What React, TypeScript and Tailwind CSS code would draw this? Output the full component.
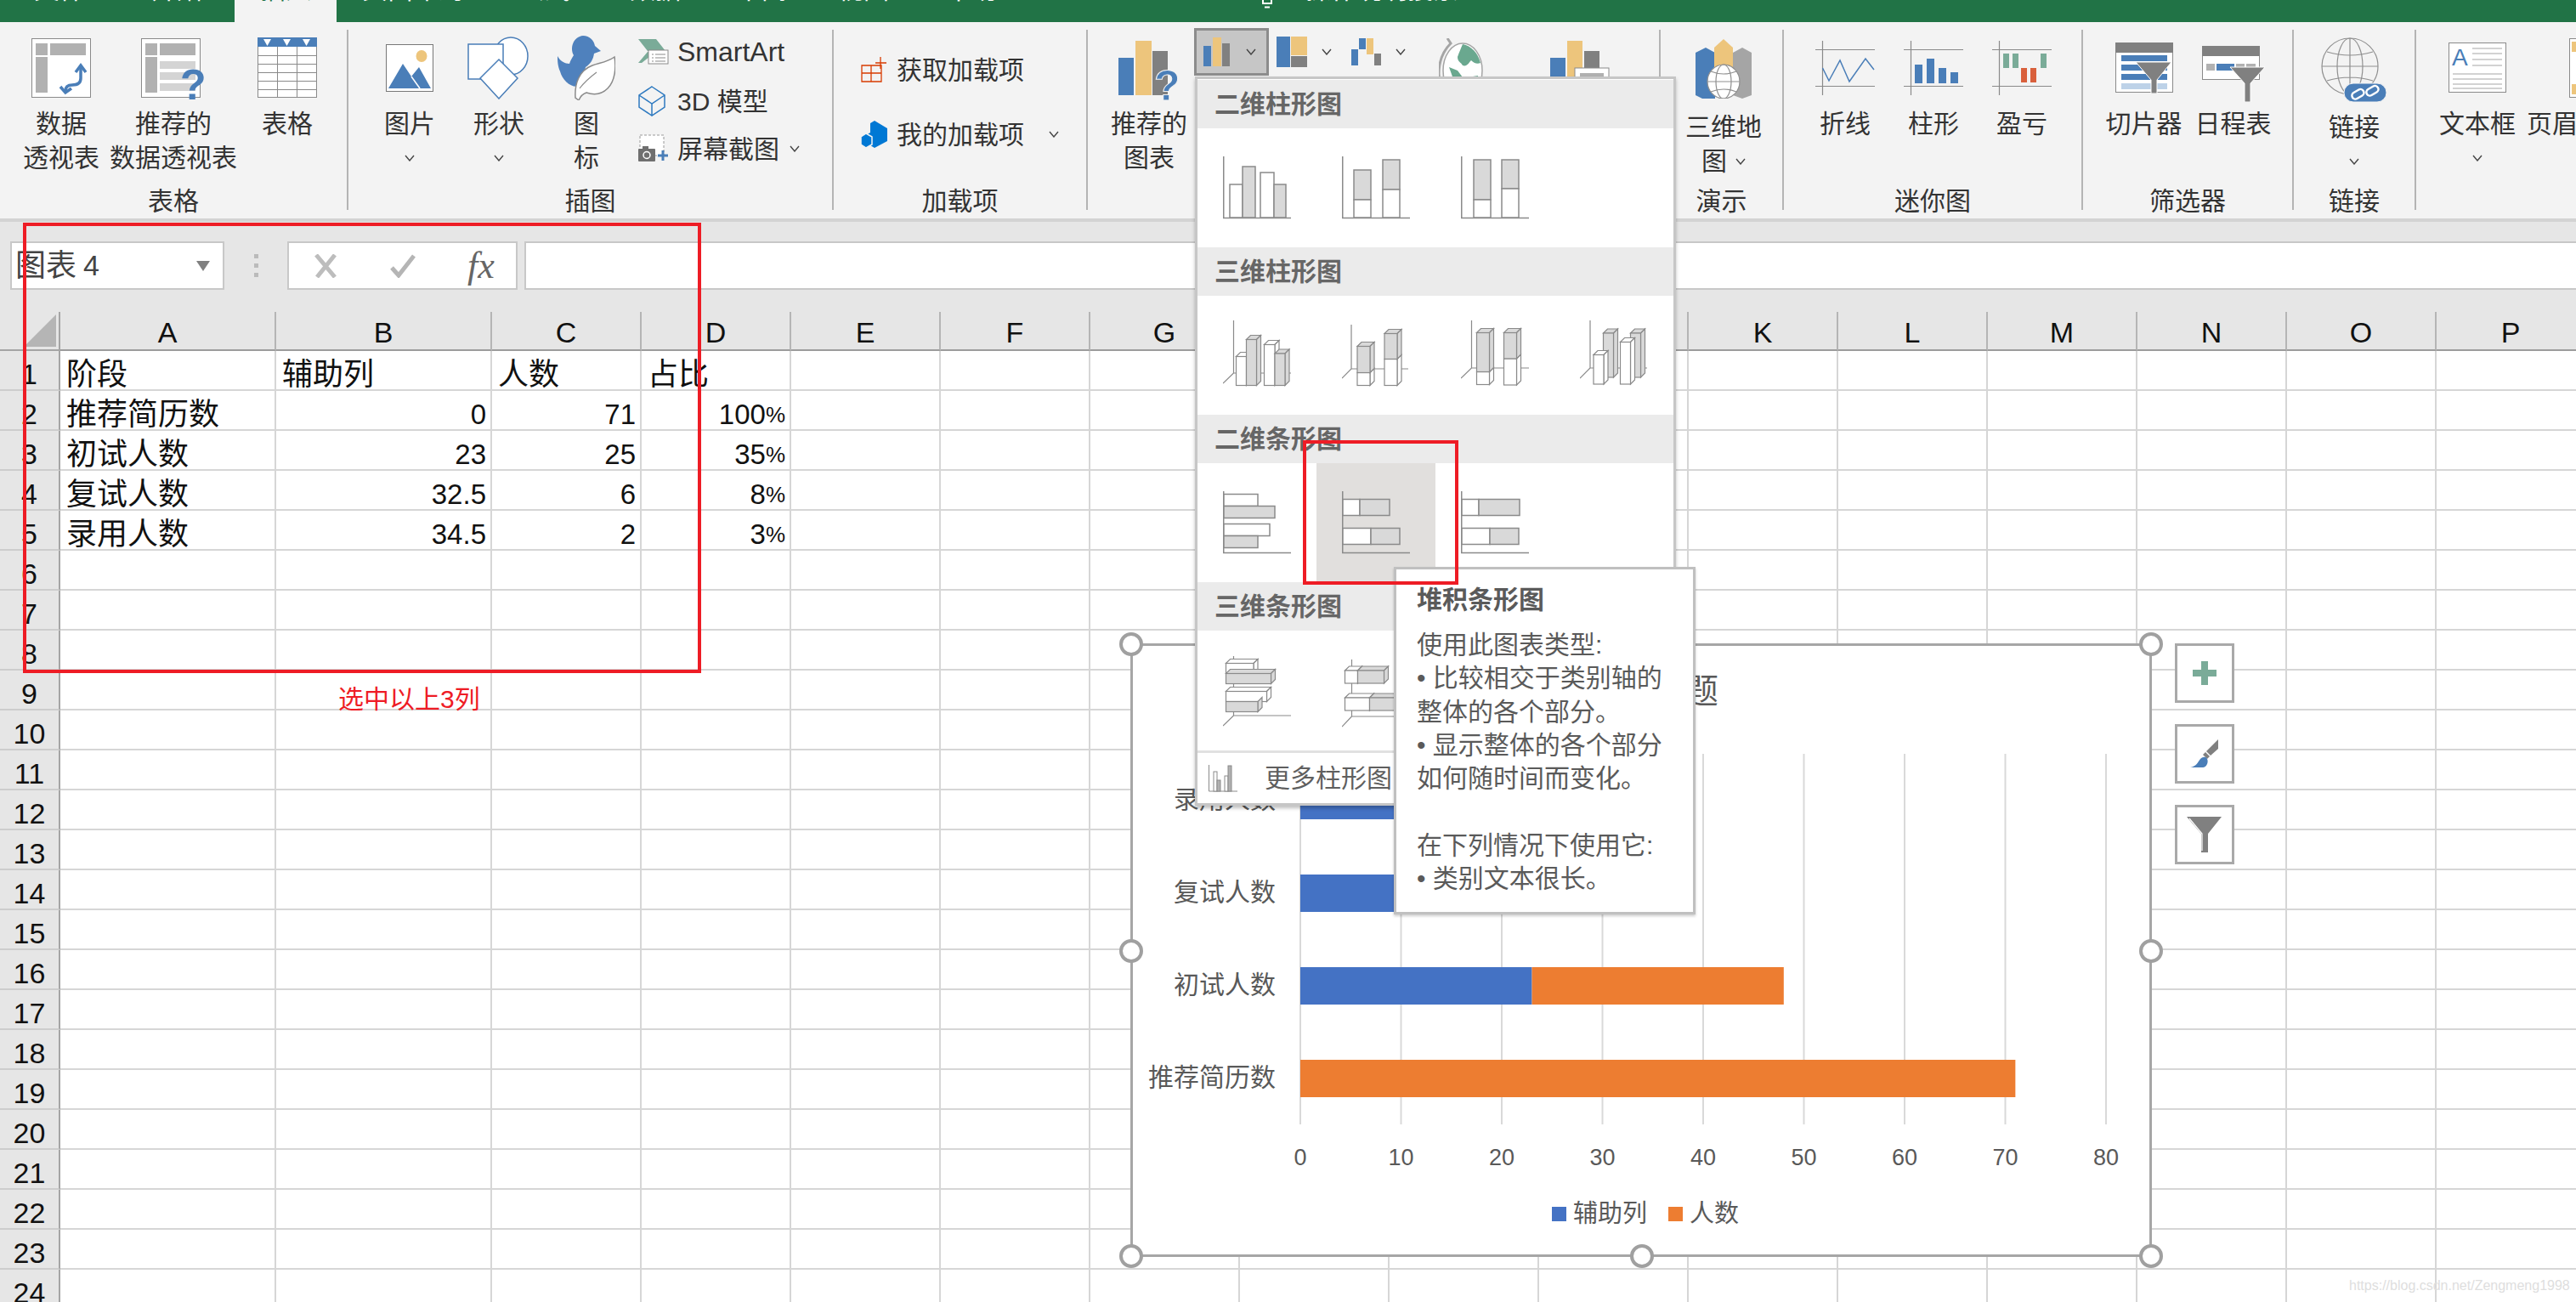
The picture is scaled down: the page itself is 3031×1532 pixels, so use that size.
import type { ReactNode } from 'react'
import clsx from 'clsx'

const BLUE = '#4a7eb8'
const GOLD = '#edc57c'
const GRAY = '#808080'
const LINE = '#8a8a8a'
const FILL = '#d9d9d9'

function Chevron() {
  return (
    <svg width="12" height="8" viewBox="0 0 12 8" className="inline-block">
      <path d="M1 1l5 6 5-6" fill="none" stroke="#444" strokeWidth="1.4" />
    </svg>
  )
}

function PivotIcon() {
  return (
    <svg width="70" height="70" viewBox="0 0 70 70">
      <rect x="0.5" y="0.5" width="69" height="69" fill="#fff" stroke={LINE} />
      <rect x="5" y="6" width="14" height="14" fill="#b1b1b1" />
      <rect x="22" y="6" width="42" height="14" fill="#b1b1b1" />
      <rect x="5" y="22" width="14" height="42" fill="#b1b1b1" />
      <path d="M58 33v14q0 8-10 8-8 0-8 7" fill="none" stroke={BLUE} strokeWidth="3.5" />
      <path d="M52 40l6-8 6 8M34 57l6 7 7-5" fill="none" stroke={BLUE} strokeWidth="3.5" />
    </svg>
  )
}

function RecPivotIcon() {
  return (
    <svg width="76" height="76" viewBox="0 0 76 76">
      <rect x="0.5" y="0.5" width="69" height="69" fill="#fff" stroke={LINE} />
      <rect x="5" y="6" width="14" height="14" fill="#b1b1b1" />
      <rect x="22" y="6" width="42" height="14" fill="#b1b1b1" />
      <rect x="5" y="22" width="14" height="42" fill="#b1b1b1" />
      <rect x="22" y="27" width="42" height="9" fill="#d4d4d4" />
      <rect x="22" y="40" width="42" height="9" fill="#d4d4d4" />
      <rect x="22" y="53" width="42" height="9" fill="#d4d4d4" />
      <text x="46" y="72" fontSize="50" fontWeight="700" fill={BLUE} fontFamily="Liberation Sans">?</text>
    </svg>
  )
}

function TableIcon() {
  return (
    <svg width="70" height="72" viewBox="0 0 70 72">
      <rect x="0.5" y="0.5" width="69" height="70" fill="#fff" stroke={LINE} />
      <rect x="0" y="0" width="70" height="11" fill={BLUE} />
      <path d="M7 2h9l-4.500 8zM30 2h9l-4.500 8zM53 2h9l-4.500 8z" fill="#fff" />
      <path d="M23.500 11v60M46.500 11v60M0 21.500h70M0 31.500h70M0 41.500h70M0 51.500h70M0 61.500h70" stroke={LINE} strokeWidth="1" />
    </svg>
  )
}

function PictureIcon() {
  return (
    <svg width="56" height="57" viewBox="0 0 56 57">
      <rect x="0.5" y="0.5" width="55" height="55" fill="#fff" stroke="#777" />
      <ellipse cx="42" cy="14" rx="6.500" ry="7" fill={GOLD} />
      <path d="M3 52l17-29 10 15 9-11 14 25z" fill={BLUE} />
      <path d="M30 38l10 14" stroke="#fff" strokeWidth="1.500" />
    </svg>
  )
}

function ShapesIcon() {
  return (
    <svg width="74" height="74" viewBox="0 0 74 74" fill="#fff" stroke={BLUE} strokeWidth="1.500">
      <ellipse cx="51" cy="23" rx="20" ry="22" />
      <rect x="1" y="9" width="41" height="41" />
      <path d="M37 27l22 22-22 24-22-24z" />
    </svg>
  )
}

function IconsIcon() {
  return (
    <svg width="68" height="76" viewBox="0 0 68 76">
      <path d="M0 24c3 6 9 9 14 9 1-4 4-8 5-10-5-9 0-22 11-23 8 0 13 6 14 12l7 6-8 3c-1 7-4 12-10 16-2 8 0 18-5 21-9 6-22-4-25-16-3-7-3-13-3-18z" fill="#4f81bd" />
      <path d="M21 73c-1-16 4-32 20-38 8-3 18-4 26-10 2 12 1 28-8 37-7 7-16 8-25 5-3 1-7 4-9 9z" fill="#fff" stroke="#8a8a8a" strokeWidth="1.500" />
      <path d="M26 62c6-8 12-13 20-19" fill="none" stroke="#8a8a8a" strokeWidth="1.200" />
    </svg>
  )
}

function SmartArtIcon() {
  return (
    <svg width="36" height="30" viewBox="0 0 36 30">
      <path d="M0 0h21l11 14H11zM11 15h10L4 28H0z" fill="#7aab98" />
      <rect x="12" y="13" width="23" height="16" fill="#fff" stroke={LINE} />
      <path d="M16 18h2m2 0h12M16 22h2m2 0h12M16 26h2m2 0h12" stroke="#8a8a8a" />
    </svg>
  )
}

function CubeIcon() {
  return (
    <svg width="32" height="36" viewBox="0 0 32 36" fill="none" stroke="#2f7ac0" strokeWidth="1.500">
      <path d="M16 1l15 10v14L16 35 1 25V11zM1 11l15 10 15-10M16 21v14" />
    </svg>
  )
}

function ScreenshotIcon() {
  return (
    <svg width="36" height="34" viewBox="0 0 36 34">
      <rect x="2" y="1" width="28" height="24" fill="#fff" stroke="#999" strokeDasharray="3 2" />
      <rect x="0" y="17" width="20" height="15" rx="1" fill="#6f6f6f" />
      <rect x="5" y="14" width="7" height="4" fill="#6f6f6f" />
      <circle cx="10" cy="24.500" r="4" fill="none" stroke="#fff" strokeWidth="1.500" />
      <path d="M29 19v12M23 25h12" stroke={BLUE} strokeWidth="3" />
    </svg>
  )
}

function StoreIcon() {
  return (
    <svg width="30" height="30" viewBox="0 0 30 30" fill="none" stroke="#d83b01" strokeWidth="1.300">
      <path d="M1 10h23v19H1zM1 19h23M12 10v19" />
      <path d="M23 0v14M17 7h13" />
    </svg>
  )
}

function MyAddinIcon() {
  return (
    <svg width="32" height="32" viewBox="0 0 32 32">
      <path d="M16 0l15 9v15l-15 8-5-3v-9l-5-3 5-3V3z" fill="#0078d4" />
      <path d="M6 15l7 4v9l-7 4-6-4v-9z" fill="#0078d4" stroke="#f3f3f3" strokeWidth="1.500" />
    </svg>
  )
}

function RecChartIcon() {
  return (
    <svg width="72" height="72" viewBox="0 0 72 72">
      <rect x="0" y="20" width="18" height="44" fill={BLUE} />
      <rect x="20" y="0" width="19" height="64" fill={GOLD} />
      <rect x="40" y="12" width="18" height="52" fill={GRAY} />
      <text x="42" y="70" fontSize="50" fontWeight="700" fill={BLUE} stroke="#f3f3f3" strokeWidth="1" fontFamily="Liberation Sans">?</text>
    </svg>
  )
}

function GlobeIcon() {
  return (
    <svg width="52" height="80" viewBox="0 0 52 80">
      <path d="M10 0l4 6C4 16 0 28 0 42c0 12 4 22 10 30" fill="none" stroke="#a5a5a5" strokeWidth="3" />
      <ellipse cx="28" cy="38" rx="23" ry="32" fill="#fff" stroke="#a5a5a5" strokeWidth="1.500" />
      <path d="M28 7c10 2 18 10 21 22-4 2-8 0-11-3-3 3-5 8-10 6-2-4-6-4-6-10 2-6 4-10 6-15zM12 34l10 4 6 8-5 8-6-6zM34 46l12-2c0 8-2 14-8 20-3-6-6-10-4-18z" fill="#6aa88f" />
    </svg>
  )
}

function PivotChartIcon() {
  return (
    <svg width="70" height="72" viewBox="0 0 70 72">
      <rect x="0" y="20" width="18" height="44" fill={BLUE} />
      <rect x="20" y="0" width="18" height="64" fill={GOLD} />
      <rect x="40" y="12" width="18" height="52" fill={GRAY} />
      <rect x="29" y="32" width="40" height="32" fill="#fff" stroke={LINE} />
      <rect x="35" y="38" width="28" height="8" fill="#b1b1b1" />
    </svg>
  )
}

function Map3dIcon() {
  return (
    <svg width="66" height="70" viewBox="0 0 66 70">
      <path d="M0 16l12-6 11 6v54H8l-8-4z" fill={BLUE} />
      <path d="M22 10L33 0l11 10v50H22z" fill={GOLD} />
      <path d="M44 16l11-6 11 6v50l-11 4-11-4z" fill="#a5a5a5" />
      <g fill="#fff" stroke="#8f8f8f" strokeWidth="1.200">
        <ellipse cx="33" cy="50" rx="19" ry="20" />
        <ellipse cx="33" cy="50" rx="9" ry="20" fill="none" />
        <path d="M14 50h38M18 38q15 6 30 0M18 62q15-6 30 0" fill="none" />
      </g>
    </svg>
  )
}

function SparkAxes({ children }: { children: ReactNode }) {
  return (
    <svg width="70" height="64" viewBox="0 0 70 64">
      <path d="M8.500 0v64M0 10.500h70M0 53.500h70" stroke={LINE} strokeWidth="1.200" />
      {children}
    </svg>
  )
}

function SlicerIcon() {
  return (
    <svg width="68" height="60" viewBox="0 0 68 60">
      <rect x="0.500" y="0.500" width="67" height="58" fill="#fff" stroke={LINE} />
      <rect x="0" y="0" width="68" height="12" fill={GRAY} />
      <rect x="7" y="15" width="54" height="7" fill={BLUE} />
      <rect x="7" y="26" width="54" height="7" fill={BLUE} />
      <rect x="7" y="37" width="54" height="7" fill={BLUE} />
      <rect x="7" y="48" width="54" height="7" fill="#bdd2e8" />
      <path d="M24 23h42L49 44v16h-7V44z" fill={GRAY} stroke="#fff" />
    </svg>
  )
}

function TimelineIcon() {
  return (
    <svg width="74" height="66" viewBox="0 0 74 66">
      <rect x="0.500" y="0.500" width="67" height="39" fill="#fff" stroke={LINE} />
      <rect x="0" y="0" width="68" height="12" fill={GRAY} />
      <rect x="5" y="21" width="10" height="8" fill="#b1b1b1" />
      <rect x="17" y="21" width="11" height="8" fill={BLUE} />
      <rect x="28" y="21" width="10" height="8" fill={BLUE} />
      <rect x="40" y="21" width="10" height="8" fill="#b1b1b1" />
      <rect x="52" y="21" width="11" height="8" fill="#b1b1b1" />
      <path d="M33 25h41L57 44v22h-7V44z" fill={GRAY} stroke="#fff" />
    </svg>
  )
}

function LinkIcon() {
  return (
    <svg width="78" height="76" viewBox="0 0 78 76">
      <g fill="none" stroke="#8f8f8f" strokeWidth="1.200">
        <ellipse cx="34" cy="34" rx="33" ry="33" />
        <ellipse cx="34" cy="34" rx="15" ry="33" />
        <path d="M1 34h66M7 17q27 8 54 0M7 51q27-8 54 0M34 1v66" />
      </g>
      <rect x="27" y="54" width="50" height="22" rx="11" fill={BLUE} stroke="#f3f3f3" />
      <g fill="none" stroke="#fff" strokeWidth="2.500">
        <rect x="36" y="63" width="15" height="8" rx="4" transform="rotate(-30 43 67)" />
        <rect x="53" y="59" width="15" height="8" rx="4" transform="rotate(-30 60 63)" />
      </g>
    </svg>
  )
}

function TextBoxIcon() {
  return (
    <svg width="68" height="60" viewBox="0 0 68 60">
      <rect x="0.500" y="0.500" width="67" height="58" fill="#fff" stroke={LINE} />
      <text x="4" y="27" fontSize="28" fill={BLUE} fontFamily="Liberation Sans">A</text>
      <path d="M28 7h35M28 13h35M28 20h35M28 27h35M5 37h58M5 43h58M5 49h58M5 54h58" stroke="#a5a5a5" />
    </svg>
  )
}

function HeaderFooterIcon() {
  return (
    <svg width="70" height="70" viewBox="0 0 70 70">
      <rect x="0.500" y="0.500" width="69" height="69" fill="#fff" stroke={LINE} />
      <rect x="3" y="4" width="64" height="12" fill={GOLD} />
      <rect x="3" y="54" width="64" height="12" fill={GOLD} />
    </svg>
  )
}

// one button of a ribbon group: large icon on top, text below
function Big({ icon, lines, chevron, tall, className }: { icon: ReactNode; lines: ReactNode[]; chevron?: boolean; tall?: boolean; className: string }) {
  return (
    <div className={clsx('flex shrink-0 flex-col items-center', className)}>
      <div className={clsx('mb-[6px] flex items-center justify-center', tall ? 'h-[84px]' : 'h-[80px]')}>{icon}</div>
      {lines.map((line, i) => (
        <div key={i} className="h-[40px] whitespace-nowrap leading-[40px]">
          {line}
        </div>
      ))}
      {chevron && (
        <div className="flex h-[40px] items-center">
          <Chevron />
        </div>
      )}
    </div>
  )
}

function Group({ label, className, children }: { label: string; className: string; children: ReactNode }) {
  return (
    <div className={clsx('flex h-full shrink-0 flex-col justify-between', className)}>
      <div className="flex pt-[14px]">{children}</div>
      <div className="h-[40px] text-center leading-[40px]">{label}</div>
    </div>
  )
}

function Sep() {
  return <div className="mt-[9px] h-[212px] w-[2px] shrink-0 bg-[#b4b4b4]" />
}

function Ribbon() {
  return (
    <div className="flex h-[231px] overflow-hidden bg-[#f3f3f3] text-[30px] text-[#333]">
      <Group label="表格" className="w-[408px]">
        <Big className="w-[144px]" icon={<PivotIcon />} lines={['数据', '透视表']} />
        <Big className="w-[120px]" icon={<div className="mt-[6px]"><RecPivotIcon /></div>} lines={['推荐的', '数据透视表']} />
        <Big className="w-[148px]" icon={<TableIcon />} lines={['表格']} />
      </Group>
      <Sep />
      <Group label="插图" className="w-[569px]">
        <Big className="ml-[42px] w-[60px]" icon={<PictureIcon />} lines={['图片']} chevron />
        <Big className="ml-[45px] w-[60px]" icon={<ShapesIcon />} lines={['形状']} chevron />
        <Big className="ml-[43px] w-[60px]" icon={<IconsIcon />} lines={['图', '标']} />
        <div className="-mt-[8px] ml-[31px] flex flex-col">
          <div className="flex h-[58px] items-center">
            <div className="w-[46px]"><SmartArtIcon /></div>
            <span className="text-[32px]">SmartArt</span>
          </div>
          <div className="flex h-[58px] items-center">
            <div className="w-[46px]"><CubeIcon /></div>
            <span>3D 模型</span>
          </div>
          <div className="-mt-[2px] flex h-[58px] items-center">
            <div className="w-[46px]"><ScreenshotIcon /></div>
            <span>屏幕截图</span>
            <span className="ml-[12px] flex"><Chevron /></span>
          </div>
        </div>
      </Group>
      <Sep />
      <Group label="加载项" className="w-[297px]">
        <div className="ml-[32px] mt-[4px] flex flex-col">
          <div className="flex h-[76px] items-center">
            <div className="w-[42px]"><StoreIcon /></div>
            <span>获取加载项</span>
          </div>
          <div className="flex h-[76px] items-center">
            <div className="w-[42px]"><MyAddinIcon /></div>
            <span>我的加载项</span>
            <span className="ml-[29px] flex"><Chevron /></span>
          </div>
        </div>
      </Group>
      <Sep />
      <Group label="图表" className="w-[672px]">
        <Big className="ml-[27px] w-[90px]" icon={<div className="mt-[8px]"><RecChartIcon /></div>} lines={['推荐的', '图表']} />
        <div className="-mt-[7px] ml-[8px] flex h-[56px]">
          <div className="flex w-[88px] items-center gap-[18px] border-[3px] border-[#8c8c8c] bg-[#c6c6c6] pl-[8px]">
            <svg width="32" height="34" viewBox="0 0 32 34">
              <rect x="0" y="10" width="9" height="24" fill={BLUE} />
              <rect x="11" y="0" width="10" height="34" fill={GOLD} />
              <rect x="22" y="7" width="9" height="27" fill={GRAY} />
            </svg>
            <Chevron />
          </div>
          <div className="flex w-[88px] items-center gap-[17px] pl-[9px]">
            <svg width="36" height="36" viewBox="0 0 36 36">
              <rect x="0" y="0" width="16" height="36" fill={BLUE} />
              <rect x="17" y="0" width="19" height="22" fill={GOLD} />
              <rect x="17" y="23" width="19" height="13" fill={GRAY} />
            </svg>
            <Chevron />
          </div>
          <div className="flex w-[88px] items-center gap-[17px] pl-[9px]">
            <svg width="35" height="32" viewBox="0 0 35 32">
              <rect x="0" y="13" width="8" height="19" fill={BLUE} />
              <rect x="9" y="0" width="8" height="13" fill={BLUE} />
              <rect x="18" y="0" width="8" height="19" fill={GOLD} />
              <rect x="27" y="18" width="8" height="14" fill={GRAY} />
            </svg>
            <Chevron />
          </div>
        </div>
        <Big className="w-[100px]" icon={<div className="mt-[10px]"><GlobeIcon /></div>} lines={['地图']} />
        <Big className="ml-[40px] w-[100px]" icon={<div className="mt-[8px]"><PivotChartIcon /></div>} lines={['数据透视图']} />
      </Group>
      <Sep />
      <Group label="演示" className="w-[143px]">
        <Big
          className="ml-[29px] w-[90px]"
          tall
          icon={<div className="-mt-[2px]"><Map3dIcon /></div>}
          lines={[
            '三维地',
            <span className="flex items-center gap-[10px]">
              图 <Chevron />
            </span>,
          ]}
        />
      </Group>
      <Sep />
      <Group label="迷你图" className="w-[350px]">
        <Big
          className="ml-[20px] w-[104px]"
          icon={
            <SparkAxes>
              <polyline points="8.500,32 16,47 29,23 40,48 59,21 69,34" fill="none" stroke={BLUE} strokeWidth="1.500" />
            </SparkAxes>
          }
          lines={['折线']}
        />
        <Big
          className="w-[104px]"
          icon={
            <SparkAxes>
              <rect x="13" y="28" width="9" height="22" fill={BLUE} />
              <rect x="27" y="21" width="9" height="29" fill={BLUE} />
              <rect x="41" y="32" width="9" height="18" fill={BLUE} />
              <rect x="55" y="37" width="9" height="13" fill={BLUE} />
            </SparkAxes>
          }
          lines={['柱形']}
        />
        <Big
          className="w-[104px]"
          icon={
            <SparkAxes>
              <rect x="13" y="15" width="7" height="17" fill="#7aab98" />
              <rect x="24" y="15" width="7" height="17" fill="#7aab98" />
              <rect x="34" y="32" width="7" height="17" fill="#d9603c" />
              <rect x="45" y="32" width="7" height="17" fill="#d9603c" />
              <rect x="57" y="15" width="7" height="17" fill="#7aab98" />
            </SparkAxes>
          }
          lines={['盈亏']}
        />
      </Group>
      <Sep />
      <Group label="筛选器" className="w-[246px]">
        <Big className="ml-[19px] w-[105px]" icon={<SlicerIcon />} lines={['切片器']} />
        <Big className="w-[105px]" icon={<div className="mt-[14px]"><TimelineIcon /></div>} lines={['日程表']} />
      </Group>
      <Sep />
      <Group label="链接" className="w-[142px]">
        <Big className="ml-[21px] w-[100px]" tall icon={<LinkIcon />} lines={['链接']} chevron />
      </Group>
      <Sep />
      <Group label="文本" className="w-[600px]">
        <Big className="ml-[22px] w-[100px]" icon={<TextBoxIcon />} lines={['文本框']} chevron />
        <Big className="ml-[8px] w-[150px]" icon={<div className="ml-[20px]"><HeaderFooterIcon /></div>} lines={['页眉和页脚']} />
      </Group>
    </div>
  )
}

function Tabs() {
  const tabs = [
    { label: '文件', w: 'w-[140px]' },
    { label: '开始', w: 'w-[136px]' },
    { label: '插入', w: 'w-[120px] bg-[#f3f3f3] text-[#217346]' },
    { label: '页面布局', w: 'w-[180px]' },
    { label: '公式', w: 'w-[130px]' },
    { label: '数据', w: 'w-[130px]' },
    { label: '审阅', w: 'w-[120px]' },
    { label: '视图', w: 'w-[120px]' },
    { label: '帮助', w: 'w-[134px]' },
  ]
  return (
    <div className="flex h-[26px] overflow-hidden bg-[#217346] text-[30px] leading-[30px] text-white">
      {tabs.map(t => (
        <div key={t.label} className={clsx('flex justify-center', t.w)}>
          <span className="-mt-[27px] h-[30px]">{t.label}</span>
        </div>
      ))}
      <svg width="12" height="10" viewBox="0 0 12 10" className="ml-[275px]">
        <path d="M1 0v4h10V0" fill="none" stroke="#fff" strokeWidth="2" />
        <path d="M3 8.500h6" stroke="#fff" strokeWidth="2" />
      </svg>
      <span className="-mt-[27px] ml-[39px] h-[30px]">操作说明搜索</span>
    </div>
  )
}

function FormulaBar() {
  return (
    <div className="flex h-[110px] border-t-4 border-[#d3d3d3] bg-[#e6e6e6] pt-[23px]">
      <div className="ml-[12px] flex h-[57px] w-[252px] items-center border-2 border-[#c8c8c8] bg-white pl-[4px] pr-[14px] text-[#444]">
        <span className="text-[36px]">图表</span>
        <span className="ml-[8px] text-[34px]">4</span>
        <svg width="18" height="12" viewBox="0 0 18 12" className="ml-auto">
          <path d="M1 0h16l-8 12z" fill="#808080" />
        </svg>
      </div>
      <div className="ml-[32px] flex h-[57px] w-[10px] flex-col items-center justify-center gap-[6px]">
        <div className="h-[5px] w-[5px] bg-[#bbb]" />
        <div className="h-[5px] w-[5px] bg-[#bbb]" />
        <div className="h-[5px] w-[5px] bg-[#bbb]" />
      </div>
      <div className="ml-[32px] flex h-[57px] w-[271px] items-center border-2 border-[#c8c8c8] bg-white">
        <svg width="30" height="28" viewBox="0 0 30 28" className="ml-[29px] shrink-0">
          <path d="M3 1l22 26M25 1L4 27" fill="none" stroke="#bdbdbd" strokeWidth="5" />
        </svg>
        <svg width="32" height="28" viewBox="0 0 32 28" className="ml-[59px] shrink-0">
          <path d="M3 16l8 9L29 2" fill="none" stroke="#b5b5b5" strokeWidth="5" />
        </svg>
        <span className="ml-[60px] font-['Liberation_Serif',serif] text-[44px] italic leading-none text-[#666]">fx</span>
      </div>
      <div className="ml-[8px] h-[57px] flex-1 border-y-2 border-l-2 border-[#c8c8c8] bg-white" />
    </div>
  )
}

const COLUMNS = ['A', 'B', 'C', 'D', 'E', 'F', 'G', 'H', 'I', 'J', 'K', 'L', 'M', 'N', 'O', 'P']

const DATA: (string | number)[][] = [
  ['阶段', '辅助列', '人数', '占比'],
  ['推荐简历数', 0, 71, '100'],
  ['初试人数', 23, 25, '35'],
  ['复试人数', 32.5, 6, '8'],
  ['录用人数', 34.5, 2, '3'],
]

function Cell({ row, col }: { row: number; col: number }) {
  const value = DATA[row]?.[col]
  const isHead = row === 0
  const isPercent = !isHead && col === 3 && value !== undefined
  const isText = typeof value === 'string' && !isPercent
  return (
    <div
      className={clsx(
        'flex h-[47px] items-center overflow-visible whitespace-nowrap border-b-2 border-r-2 border-[#d6d6d6] pt-[10px] leading-none text-[#111]',
        isText ? 'pl-[7px] text-[36px]' : 'justify-end pr-[5px] text-[33px]',
      )}
    >
      {value}
      {isPercent && <span className="text-[26px]">%</span>}
    </div>
  )
}

function Sheet() {
  const rows = Array.from({ length: 24 }, (_, i) => i)
  return (
    <div className="grid grid-cols-[71px_254px_254px_176px_176px_repeat(12,176px)] text-[#111]">
      <div className="flex h-[46px] items-center justify-end border-b-2 border-r-2 border-[#a5a5a5] bg-[#e6e6e6] pr-[3px]">
        <svg width="38" height="38" viewBox="0 0 38 38">
          <path d="M38 0v38H0z" fill="#b5b5b5" />
        </svg>
      </div>
      {COLUMNS.map(c => (
        <div key={c} className="flex h-[46px] items-center justify-center border-b-2 border-r-2 border-b-[#9c9c9c] border-r-[#b5b5b5] bg-[#e6e6e6] pt-[4px] text-[34px] leading-none">
          {c}
        </div>
      ))}
      {rows.map(r => (
        <div key={r} className="contents">
          <div className="flex h-[47px] items-center justify-center border-b-2 border-r-2 border-b-[#cdcdcd] border-r-[#a5a5a5] bg-[#e6e6e6] pt-[9px] text-[34px] leading-none">
            {r + 1}
          </div>
          {COLUMNS.map((c, i) => (
            <Cell key={c} row={r} col={i} />
          ))}
        </div>
      ))}
    </div>
  )
}

function Col2d({ children }: { children: ReactNode }) {
  return (
    <svg width="82" height="74" viewBox="0 0 82 74" stroke={LINE} strokeWidth="1.500">
      <path d="M.75 0v72.500H80" fill="none" />
      {children}
    </svg>
  )
}

function Box({ x, y, w, h, gray }: { x: number; y: number; w: number; h: number; gray?: boolean }) {
  return <rect x={x} y={y} width={w} height={h} fill={gray ? FILL : '#fff'} />
}

// a box with top and side faces for the 3d thumbnails
function Box3d({ x, y, w, h, gray, top = true, d = 5 }: { x: number; y: number; w: number; h: number; gray?: boolean; top?: boolean; d?: number }) {
  const fill = gray ? FILL : '#fff'
  return (
    <g fill={fill}>
      {top && <path d={`M${x} ${y}l${d} ${-d}h${w}l${-d} ${d}z`} />}
      <path d={`M${x + w} ${y}l${d} ${-d}v${h}l${-d} ${d}z`} />
      <rect x={x} y={y} width={w} height={h} />
    </g>
  )
}

function Col3d({ axis, children }: { axis: string; children: ReactNode }) {
  return (
    <svg width="82" height="84" viewBox="0 0 82 84" stroke={LINE} strokeWidth="1.200">
      <path d={axis} fill="none" />
      {children}
    </svg>
  )
}

function MenuHead({ children }: { children: ReactNode }) {
  return <div className="h-[57px] bg-[#ebebeb] pl-[20px] text-[30px] font-bold leading-[57px] text-[#666]">{children}</div>
}

function Thumb({ children, active }: { children?: ReactNode; active?: boolean }) {
  return <div className={clsx('h-[140px] w-[140px] pl-[30px]', active && 'bg-[#e1dfdd]')}>{children}</div>
}

function ChartMenu() {
  return (
    <div className="absolute left-[1406px] top-[90px] z-20 h-[858px] w-[566px] border-[3px] border-[#c6c6c6] bg-white pt-[1px] shadow-[0_3px_4px_rgba(0,0,0,0.25)]">
      <MenuHead>二维柱形图</MenuHead>
      <div className="flex">
        <Thumb>
          <div className="pt-[33px]">
            <Col2d>
              <Box x={8} y={33} w={15} h={39} />
              <Box x={23} y={12} w={15} h={60} gray />
              <Box x={44} y={19} w={16} h={53} />
              <Box x={60} y={33} w={14} h={39} gray />
            </Col2d>
          </div>
        </Thumb>
        <Thumb>
          <div className="pt-[33px]">
            <Col2d>
              <Box x={14} y={16} w={20} h={35} gray />
              <Box x={14} y={51} w={20} h={21} />
              <Box x={48} y={4} w={20} h={35} gray />
              <Box x={48} y={39} w={20} h={33} />
            </Col2d>
          </div>
        </Thumb>
        <Thumb>
          <div className="pt-[33px]">
            <Col2d>
              <Box x={15} y={4} w={20} h={47} gray />
              <Box x={15} y={51} w={20} h={21} />
              <Box x={48} y={4} w={20} h={34} gray />
              <Box x={48} y={38} w={20} h={34} />
            </Col2d>
          </div>
        </Thumb>
      </div>
      <MenuHead>三维柱形图</MenuHead>
      <div className="flex">
        <Thumb>
          <div className="pt-[29px]">
            <Col3d axis="M12.500 0v62L0 74M12.500 62H80">
              <Box3d x={15.500} y={42.500} w={12} h={34} />
              <Box3d x={27.500} y={22.500} w={12} h={54} gray />
              <Box3d x={48.500} y={28.500} w={12.500} h={48} />
              <Box3d x={61} y={39} w={12} h={37.500} gray />
            </Col3d>
          </div>
        </Thumb>
        <Thumb>
          <div className="pt-[29px]">
            <Col3d axis="M11 5v52L0 68M11 57h67">
              <Box3d x={18} y={61.500} w={15} h={15} top={false} />
              <Box3d x={18} y={30.500} w={15} h={31} gray />
              <Box3d x={50} y={45.500} w={15} h={31} top={false} />
              <Box3d x={50} y={15.500} w={15} h={30} gray />
            </Col3d>
          </div>
        </Thumb>
        <Thumb>
          <div className="pt-[29px]">
            <Col3d axis="M12.500 0v56L0 68M12.500 56H80">
              <Box3d x={18.500} y={60.500} w={15} h={15} top={false} />
              <Box3d x={18.500} y={14.500} w={15} h={46} gray />
              <Box3d x={50.500} y={45} w={15} h={31} top={false} />
              <Box3d x={50.500} y={14.500} w={15} h={30.500} gray />
            </Col3d>
          </div>
        </Thumb>
        <Thumb>
          <div className="pt-[29px]">
            <Col3d axis="M12 0v56L0 68M12 56h67">
              <Box3d x={27.500} y={15} w={12} h={52} gray />
              <Box3d x={59.500} y={15} w={12} h={52} gray />
              <Box3d x={16} y={40.500} w={12} h={34.500} />
              <Box3d x={47.500} y={25.500} w={12} h={49.500} />
            </Col3d>
          </div>
        </Thumb>
      </div>
      <MenuHead>二维条形图</MenuHead>
      <div className="flex">
        <Thumb>
          <div className="pt-[33px]">
            <Col2d>
              <Box x={1} y={3.500} w={40} h={14} />
              <Box x={1} y={17.500} w={60} h={14} gray />
              <Box x={1} y={38.500} w={54} h={14} />
              <Box x={1} y={52.500} w={40} h={14} gray />
            </Col2d>
          </div>
        </Thumb>
        <Thumb active>
          <div className="pt-[33px]">
            <Col2d>
              <Box x={1} y={9.500} w={20} h={19} />
              <Box x={21} y={9.500} w={35} h={19} gray />
              <Box x={1} y={43.500} w={33} h={19} />
              <Box x={34} y={43.500} w={34} h={19} gray />
            </Col2d>
          </div>
        </Thumb>
        <Thumb>
          <div className="pt-[33px]">
            <Col2d>
              <Box x={1} y={9.500} w={20} h={19} />
              <Box x={21} y={9.500} w={48} h={19} gray />
              <Box x={1} y={43.500} w={33} h={19} />
              <Box x={34} y={43.500} w={34} h={19} gray />
            </Col2d>
          </div>
        </Thumb>
      </div>
      <MenuHead>三维条形图</MenuHead>
      <div className="flex h-[141px]">
        <Thumb>
          <div className="pt-[30px]">
            <Col3d axis="M12.500 0v70L0 82M12.500 70H80">
              <Box3d x={3.500} y={8.500} w={32.500} h={12} />
              <Box3d x={3.500} y={20.500} w={53} h={12} gray />
              <Box3d x={3.500} y={41.500} w={48} h={12} />
              <Box3d x={3.500} y={53.500} w={37.500} h={12} gray top={false} />
            </Col3d>
          </div>
        </Thumb>
        <Thumb>
          <div className="pt-[30px]">
            <Col3d axis="M11.500 4v67L0 83M11.500 71H80">
              <Box3d x={3.500} y={17} w={15} h={15} />
              <Box3d x={18.500} y={17} w={31} h={15} gray />
              <Box3d x={3.500} y={49} w={29} h={15} />
              <Box3d x={32.500} y={49} w={33} h={15} gray />
            </Col3d>
          </div>
        </Thumb>
      </div>
      <div className="flex h-[62px] items-center border-t-[3px] border-[#e1e1e1] pl-[13px] text-[30px] text-[#5f5f5f]">
        <svg width="36" height="32" viewBox="0 0 36 32" stroke={LINE} strokeWidth="1">
          <path d="M.500 0v31H34" fill="none" />
          <rect x="6" y="8" width="4" height="23" fill="#fff" />
          <rect x="10" y="18" width="4" height="13" fill="#b1b1b1" />
          <rect x="19" y="13" width="4" height="18" fill="#fff" />
          <rect x="23" y="1" width="4" height="30" fill="#b1b1b1" />
        </svg>
        <span className="ml-[30px]">更多柱形图</span>
      </div>
    </div>
  )
}

function ChartTip() {
  const lines = [
    '使用此图表类型:',
    '• 比较相交于类别轴的',
    '整体的各个部分。',
    '• 显示整体的各个部分',
    '如何随时间而变化。',
    '\u00a0',
    '在下列情况下使用它:',
    '• 类别文本很长。',
  ]
  return (
    <div className="absolute left-[1640px] top-[667px] z-30 h-[409px] w-[355px] border-[3px] border-[#c0c0c0] bg-white pl-[24px] pt-[16px] text-[30px] text-[#5a5a5a] shadow-[0_2px_3px_rgba(0,0,0,0.2)]">
      <div className="h-[40px] font-bold leading-[40px]">堆积条形图</div>
      <div className="mt-[13px] whitespace-nowrap leading-[39.300px]">
        {lines.map((l, i) => (
          <div key={i}>{l}</div>
        ))}
      </div>
    </div>
  )
}

function Chart() {
  const x0 = 1530
  const unit = 11.85
  const cats = [
    { label: '录用人数', y: 920, a: 34.5, b: 2 },
    { label: '复试人数', y: 1029, a: 32.5, b: 6 },
    { label: '初试人数', y: 1138, a: 23, b: 25 },
    { label: '推荐简历数', y: 1247, a: 0, b: 71 },
  ]
  const ticks = [0, 10, 20, 30, 40, 50, 60, 70, 80]
  return (
    <div className="absolute left-[1330px] top-[757px] z-10 h-[722px] w-[1202px] border-[3px] border-[#a6a6a6] bg-white">
      <svg width="1196" height="716" viewBox="1333 760 1196 716" fontFamily="Liberation Sans, Noto Sans CJK SC, sans-serif" fill="#595959">
        <text x="1942" y="827" fontSize="40" textAnchor="middle">图表标题</text>
        {ticks.map(t => (
          <g key={t}>
            <rect x={x0 + t * unit - 1} y="887" width="2" height="436" fill="#d9d9d9" />
            <text x={x0 + t * unit} y="1371" fontSize="27" textAnchor="middle">{t}</text>
          </g>
        ))}
        {cats.map(c => (
          <g key={c.label}>
            <text x="1501" y={c.y + 31} fontSize="30" textAnchor="end">{c.label}</text>
            <rect x={x0} y={c.y} width={c.a * unit} height="44" fill="#4472c4" />
            <rect x={x0 + c.a * unit} y={c.y} width={c.b * unit} height="44" fill="#ed7d31" />
          </g>
        ))}
        <rect x="1826" y="1420" width="17" height="17" fill="#4472c4" />
        <text x="1851" y="1438" fontSize="29">辅助列</text>
        <rect x="1963" y="1420" width="17" height="17" fill="#ed7d31" />
        <text x="1988" y="1438" fontSize="29">人数</text>
      </svg>
    </div>
  )
}

function Handle({ className }: { className: string }) {
  return <div className={clsx('absolute z-10 h-[28px] w-[28px] rounded-full border-[4px] border-[#a0a0a0] bg-white', className)} />
}

function ChartButtons() {
  return (
    <div className="absolute left-[2559px] top-[757px] z-10 flex flex-col gap-[25px]">
      <div className="flex h-[70px] w-[70px] items-center justify-center border-[3px] border-[#a9a9a9] bg-white">
        <svg width="28" height="28" viewBox="0 0 28 28">
          <path d="M10 0h8v10h10v8H18v10h-8V18H0v-8h10z" fill="#7aab98" />
        </svg>
      </div>
      <div className="flex h-[70px] w-[70px] items-center justify-center border-[3px] border-[#a9a9a9] bg-white">
        <svg width="34" height="34" viewBox="0 0 34 34">
          <path d="M33 0v11l-9 8-5-5z" fill={GRAY} />
          <path d="M18 15l5 5-3 3-5-5z" fill={GRAY} />
          <path d="M0 33c7-1 9-6 12-10 3-3 7-3 8 0 2 4-1 10-5 10z" fill={BLUE} />
        </svg>
      </div>
      <div className="flex h-[70px] w-[70px] items-center justify-center border-[3px] border-[#a9a9a9] bg-white">
        <svg width="42" height="42" viewBox="0 0 42 42">
          <path d="M0 0h41L25 20v22h-8V20z" fill={GRAY} />
          <path d="M3 2l15 18v20" fill="none" stroke="#fff" strokeWidth="1.200" />
        </svg>
      </div>
    </div>
  )
}

export default function App() {
  return (
    <div className="relative h-[1532px] w-[3031px] overflow-hidden bg-white font-['Liberation_Sans','Noto_Sans_CJK_SC',sans-serif]">
      <Tabs />
      <Ribbon />
      <FormulaBar />
      <Sheet />
      <Chart />
      <Handle className="left-[1317px] top-[744px]" />
      <Handle className="left-[2517px] top-[744px]" />
      <Handle className="left-[1317px] top-[1105px]" />
      <Handle className="left-[2517px] top-[1105px]" />
      <Handle className="left-[1317px] top-[1464px]" />
      <Handle className="left-[1918px] top-[1464px]" />
      <Handle className="left-[2517px] top-[1464px]" />
      <ChartButtons />
      <ChartMenu />
      <ChartTip />
      <div className="absolute left-[1533px] top-[518px] z-40 h-[170px] w-[183px] border-[4px] border-[#ee1c25]" />
      <div className="absolute left-[27px] top-[262px] z-40 h-[530px] w-[798px] border-[4px] border-[#ee1c25]" />
      <div className="absolute left-[398px] top-[806px] z-40 text-[30px] leading-[34px] text-[#ee1c25]">选中以上3列</div>
      <div className="absolute left-[2764px] top-[1504px] z-40 text-[16px] leading-[18px] text-[#dedede]">https://blog.csdn.net/Zengmeng1998</div>
    </div>
  )
}
